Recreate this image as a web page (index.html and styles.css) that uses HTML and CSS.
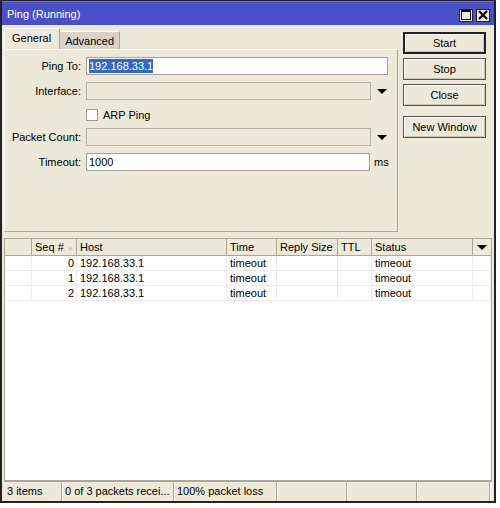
FILE: index.html
```html
<!DOCTYPE html>
<html lang="en">
<head>
    <meta charset="UTF-8">
    <title>Ping (Running)</title>
    <link rel="stylesheet" href="styles.css">
</head>
<body>
    <div class="window">
        <div class="titlebar">
            <span class="title">Ping (Running)</span>
            <div class="title-buttons">
                <span class="tbtn">
                    <svg width="10" height="10" viewBox="0 0 10 10"><rect x="0.5" y="0.5" width="9" height="9" fill="none" stroke="#000"/><rect x="0" y="0" width="10" height="2" fill="#000"/></svg>
                </span>
                <span class="tbtn">
                    <svg width="10" height="10" viewBox="0 0 10 10"><path d="M1 1 L9 9 M9 1 L1 9" stroke="#000" stroke-width="2.2"/></svg>
                </span>
            </div>
        </div>

        <div class="top">
            <div class="tabs-area">
                <div class="tabs">
                    <div class="tab active">General</div>
                    <div class="tab">Advanced</div>
                </div>
                <div class="panel">
                    <div class="row">
                        <span class="label">Ping To:</span>
                        <span class="input w-full"><span class="selected">192.168.33.1</span></span>
                    </div>
                    <div class="row">
                        <span class="label">Interface:</span>
                        <span class="input disabled w-combo"></span>
                        <span class="arrow"></span>
                    </div>
                    <div class="row check-row">
                        <span class="label"></span>
                        <span class="checkbox"></span>
                        <span class="check-label">ARP Ping</span>
                    </div>
                    <div class="row">
                        <span class="label">Packet Count:</span>
                        <span class="input disabled w-combo"></span>
                        <span class="arrow"></span>
                    </div>
                    <div class="row">
                        <span class="label">Timeout:</span>
                        <span class="input w-unit">1000</span>
                        <span class="unit">ms</span>
                    </div>
                </div>
            </div>
            <div class="actions">
                <button class="btn default">Start</button>
                <button class="btn">Stop</button>
                <button class="btn">Close</button>
                <button class="btn spaced">New Window</button>
            </div>
        </div>

        <div class="list">
            <div class="list-row head">
                <span class="cell"></span>
                <span class="cell">Seq # <span class="sort">&#9650;</span></span>
                <span class="cell">Host</span>
                <span class="cell">Time</span>
                <span class="cell">Reply Size</span>
                <span class="cell">TTL</span>
                <span class="cell">Status</span>
                <span class="cell menu"><span class="arrow"></span></span>
            </div>
            <div class="list-body">
                <div class="list-row">
                    <span class="cell"></span><span class="cell num">0</span><span class="cell">192.168.33.1</span><span class="cell">timeout</span><span class="cell"></span><span class="cell"></span><span class="cell">timeout</span><span class="cell"></span>
                </div>
                <div class="list-row">
                    <span class="cell"></span><span class="cell num">1</span><span class="cell">192.168.33.1</span><span class="cell">timeout</span><span class="cell"></span><span class="cell"></span><span class="cell">timeout</span><span class="cell"></span>
                </div>
                <div class="list-row">
                    <span class="cell"></span><span class="cell num">2</span><span class="cell">192.168.33.1</span><span class="cell">timeout</span><span class="cell"></span><span class="cell"></span><span class="cell">timeout</span><span class="cell"></span>
                </div>
            </div>
        </div>

        <div class="statusbar">
            <span class="section s1">3 items</span>
            <span class="section s2">0 of 3 packets recei...</span>
            <span class="section s3">100% packet loss</span>
            <span class="section s4"></span>
            <span class="section s5"></span>
            <span class="section s6"></span>
        </div>
    </div>
</body>
</html>
```

FILE: styles.css
```css
body {
    margin: 0;
    background-color: #fff;
    font-family: "Liberation Sans", Arial, sans-serif;
    font-size: 11px;
    color: #000;
}
.window {
    width: 496px;
    height: 503px;
    box-sizing: border-box;
    border: 2px solid #222;
    border-top-width: 1px;
    background-color: #ece9d8;
    display: flex;
    flex-direction: column;
}
.titlebar {
    height: 23px;
    background-color: #4a50c8;
    color: #fff;
    display: flex;
    align-items: center;
    justify-content: space-between;
    padding: 0 4px 0 5px;
    border-top: 1px solid #6c70d8;
}
.title {
    font-size: 11px;
    padding-top: 1px;
}
.title-buttons {
    display: flex;
    gap: 3px;
    padding-top: 3px;
}
.tbtn {
    width: 14px;
    height: 13px;
    box-sizing: border-box;
    border: 1px solid #222;
    background-color: #ece9d8;
    display: flex;
    align-items: center;
    justify-content: center;
}
.top {
    display: flex;
    padding: 3px 0 0 2px;
    gap: 5px;
}
.tabs-area {
    width: 394px;
}
.tabs {
    display: flex;
    align-items: flex-end;
    height: 21px;
}
.tab {
    height: 18px;
    box-sizing: border-box;
    padding: 3px 5px 0 5px;
    background-color: #d8d5c8;
    border-top: 1px solid #fff;
    border-right: 1px solid #aca899;
}
.tab.active {
    height: 21px;
    padding: 3px 8px 0 7px;
    background-color: #ece9d8;
    border-left: 1px solid #fff;
    border-right: 1px solid #aca899;
}
.panel {
    height: 183px;
    box-sizing: border-box;
    border: 1px solid #aca899;
    border-top-color: #fff;
    border-left-color: #fff;
    padding-top: 7px;
    display: flex;
    flex-direction: column;
    gap: 7px;
}
.row {
    display: flex;
    align-items: center;
    height: 18px;
}
.row.check-row {
    height: 13px;
    margin-top: 1px;
}
.label {
    width: 76px;
    text-align: right;
    margin-right: 5px;
    flex-shrink: 0;
}
.input {
    height: 18px;
    box-sizing: border-box;
    border: 1px solid #a0a0a0;
    background-color: #fff;
    padding: 1px 0 0 2px;
    line-height: 14px;
}
.input.disabled {
    background-color: #ece9d8;
    border-color: #b8b5a8;
}
.w-full {
    width: 302px;
}
.w-combo {
    width: 285px;
}
.w-unit {
    width: 284px;
}
.selected {
    background-color: #316ac5;
    color: #fff;
    padding: 1px 0;
}
.arrow {
    width: 0;
    height: 0;
    border-left: 5px solid transparent;
    border-right: 5px solid transparent;
    border-top: 5px solid #000;
    margin-left: 6px;
}
.checkbox {
    width: 12px;
    height: 12px;
    box-sizing: border-box;
    border: 1px solid #9a9a9a;
    background-color: #fff;
}
.check-label {
    margin-left: 5px;
}
.unit {
    margin-left: 4px;
}
.actions {
    display: flex;
    flex-direction: column;
    width: 83px;
    padding-top: 4px;
    gap: 4px;
}
.btn {
    height: 22px;
    box-sizing: border-box;
    border: 1px solid #555;
    background-color: #ece9d8;
    font-family: "Liberation Sans", Arial, sans-serif;
    font-size: 11px;
    color: #000;
    padding: 0;
    box-shadow: inset 1px 1px #fff, inset -1px -1px #cbc7b8;
}
.btn.default {
    border: 2px solid #222;
}
.btn.spaced {
    margin-top: 6px;
}
.list {
    margin: 6px 2px 0 2px;
    flex: 1;
    display: flex;
    flex-direction: column;
    border: 1px solid #aca899;
    background-color: #fff;
}
.list-row {
    display: grid;
    grid-template-columns: 27px 45px 150px 50px 61px 34px 101px 1fr;
    height: 15px;
    border-bottom: 1px solid #ececec;
    box-sizing: border-box;
}
.list-row .cell {
    border-right: 1px solid #ececec;
    padding-left: 3px;
    line-height: 14px;
    white-space: nowrap;
    overflow: hidden;
}
.list-row .cell.num {
    text-align: right;
    padding: 0 2px 0 0;
}
.list-row.head {
    height: 17px;
    background-color: #ece9d8;
    border-bottom: 1px solid #aca899;
}
.list-row.head .cell {
    border-right: 1px solid #aca899;
    line-height: 16px;
}
.list-row.head .cell.menu {
    border-right: none;
    display: flex;
    align-items: center;
    padding-left: 0;
}
.list-row.head .cell.menu .arrow {
    margin-left: 4px;
}
.sort {
    color: #c8c5b8;
    font-size: 7px;
    vertical-align: 1px;
}
.list-body {
    flex: 1;
}
.statusbar {
    display: flex;
    height: 19px;
    border-top: 1px solid #aca899;
    margin: 0 2px;
}
.section {
    box-sizing: border-box;
    border-right: 1px solid #aca899;
    box-shadow: 1px 0 #fff;
    padding: 3px 0 0 3px;
    white-space: nowrap;
}
.s1 { width: 58px; }
.s2 { width: 112px; }
.s3 { width: 103px; }
.s4 { width: 70px; }
.s5 { width: 70px; }
.s6 { width: 73px; }
```
